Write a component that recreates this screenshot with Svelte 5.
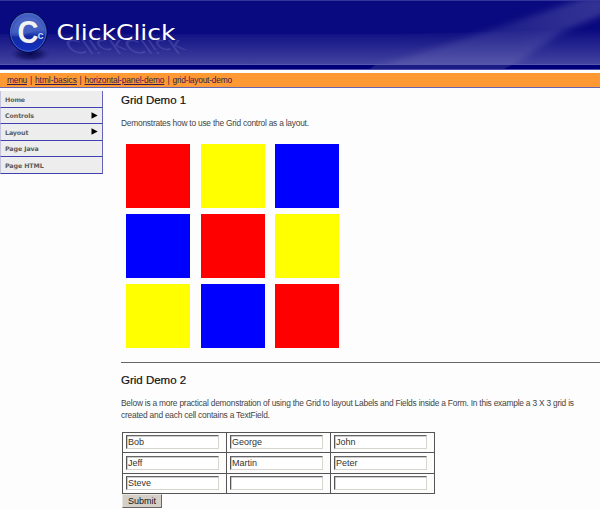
<script>
  const menu = [
    { label: 'Home', sub: false },
    { label: 'Controls', sub: true },
    { label: 'Layout', sub: true },
    { label: 'Page Java', sub: false },
    { label: 'Page HTML', sub: false }
  ];
  const colors = ['red', 'yellow', 'blue', 'blue', 'red', 'yellow', 'yellow', 'blue', 'red'];
  const rows = [
    ['Bob', 'George', 'John'],
    ['Jeff', 'Martin', 'Peter'],
    ['Steve', '', '']
  ];
</script>

<div class="page">
  <header>
    <svg width="600" height="70" viewBox="0 0 600 70">
      <defs>
        <linearGradient id="glow" x1="0" y1="0" x2="0" y2="1">
          <stop offset="0" stop-color="#0a0a80" />
          <stop offset="1" stop-color="#4242a0" />
        </linearGradient>
        <linearGradient id="beam" gradientUnits="userSpaceOnUse" x1="600" y1="0" x2="430" y2="65">
          <stop offset="0" stop-color="#fff" stop-opacity=".17" />
          <stop offset=".5" stop-color="#fff" stop-opacity=".1" />
          <stop offset="1" stop-color="#fff" stop-opacity=".1" />
        </linearGradient>
        <filter id="soft" x="-5%" y="-20%" width="110%" height="140%"><feGaussianBlur stdDeviation="3" /></filter>
        <linearGradient id="disc" x1="0" y1="0" x2="0" y2="1">
          <stop offset="0" stop-color="#4660c0" />
          <stop offset=".5" stop-color="#3450bc" />
          <stop offset=".6" stop-color="#1029a2" />
          <stop offset="1" stop-color="#1530c4" />
        </linearGradient>
        <radialGradient id="shade">
          <stop offset="0" stop-color="#080850" />
          <stop offset=".55" stop-color="#10105e" stop-opacity=".7" />
          <stop offset="1" stop-color="#202080" stop-opacity="0" />
        </radialGradient>
      </defs>
      <rect width="600" height="70" fill="#0a0a80" />
      <path d="M0 34H400L600 29V64H0Z" fill="url(#glow)" />
      <path d="M380 66L500 27L584 -2H606V13L562 32L535 50L504 74H360Z" fill="url(#beam)" filter="url(#soft)" />
      <rect y="65" width="600" height="4" fill="#000078" />
      <path d="M375 65H512L504 69H370Z" fill="#1b1b84" />
      <rect width="600" height="1" fill="#34349a" />
      <rect y="64" width="600" height="1" fill="#5656ac" />
      <rect y="69" width="600" height="1" fill="#5050ac" />
      <ellipse cx="30" cy="54" rx="20" ry="8" fill="url(#shade)" />
      <ellipse cx="28.3" cy="32.3" rx="18.8" ry="20" fill="url(#disc)" stroke="#05064a" stroke-width="1" />
      <ellipse cx="28.3" cy="32.3" rx="17.7" ry="18.9" fill="none" stroke="#4b70c8" stroke-width=".8" />
      <path d="M11.5 36A17 18.3 0 0 1 45 31Q36 30 29 33Q20 38 11.5 36Z" fill="#6e83d0" opacity=".25" />
      <text x="17.5" y="43" class="big-c" textLength="21" lengthAdjust="spacingAndGlyphs">C</text>
      <text x="37.5" y="38.5" class="small-c">c</text>
      <g transform="translate(62 40) skewX(35) scale(1 -.85)" opacity=".2">
        <text x="0" y="0" class="brand mirror" textLength="118" lengthAdjust="spacingAndGlyphs">ClickClick</text>
      </g>
      <text x="56.5" y="40" class="brand" textLength="119" lengthAdjust="spacingAndGlyphs">ClickClick</text>
    </svg>
  </header>

  <nav class="crumbs">
    <span class="link c1">menu</span><i>|</i><span class="link c2">html-basics</span><i>|</i><span
      class="link c3">horizontal-panel-demo</span><i>|</i><span class="c4">grid-layout-demo</span>
  </nav>

  <div class="body">
    <aside>
      {#each menu as item}
        <div class="item">
          <span>{item.label}</span>
          {#if item.sub}<svg width="7" height="7" viewBox="0 0 7 7"><path d="M.5 .3L6.7 3.5L.5 6.7Z" /></svg>{/if}
        </div>
      {/each}
    </aside>
    <main>
      <h2>Grid Demo 1</h2>
      <p class="p1">Demonstrates how to use the Grid control as a layout.</p>
      <div class="squares">
        {#each colors as c}<div class={c}></div>{/each}
      </div>
      <hr />
      <h2>Grid Demo 2</h2>
      <p class="p2">
        Below is a more practical demonstration of using the Grid to layout Labels and Fields inside a Form. In this example a 3 X 3 grid is<br />
        created and each cell contains a TextField.
      </p>
      <div class="table">
        {#each rows as row}
          {#each row as value}
            <div class="cell"><div class="field">{value}</div></div>
          {/each}
        {/each}
      </div>
      <button type="button">Submit</button>
    </main>
  </div>
</div>

<style>
  :global(body) { margin: 0; background: #fdfdfd; overflow: hidden; }
  .page { width: 600px; height: 509px; overflow: hidden; font-family: "Liberation Sans", Arial, sans-serif; background: #fdfdfd; }
  header { height: 70px; }
  header svg { display: block; }
  .brand { font: 21.5px "DejaVu Sans", sans-serif; fill: #fff; }
  .mirror { fill: #a0a0e0; }
  .big-c { font: bold 31px "Liberation Sans", sans-serif; fill: #f2f2f2; }
  .small-c { font: bold 11px "Liberation Sans", sans-serif; fill: #b9cff5; }
  .crumbs { display: flex; align-items: center; height: 14px; margin-top: 3px; padding-left: 7px; background: #ff9933; border-bottom: 1px solid #6464b0; font-size: 8.4px; color: #33214f; white-space: nowrap; line-height: 14px; }
  .crumbs i { width: 8px; text-align: center; font-style: normal; }
  .crumbs span { flex: none; }
  .link { text-decoration: underline; text-underline-offset: 1px; color: #3a1a50; }
  .c1 { width: 20px; letter-spacing: -.25px; }
  .c2 { width: 41.5px; letter-spacing: -.04px; }
  .c3 { width: 80px; letter-spacing: -.17px; }
  .c4 { letter-spacing: -.22px; }
  .body { display: flex; }
  aside { width: 102px; padding-top: 3px; flex: none; }
  .item { box-sizing: border-box; height: 16.5px; width: 102.5px; display: flex; align-items: center; justify-content: space-between; padding: 0 3.5px 0 4px; border-bottom: 1px solid #4040b0; border-right: 1px solid #6464bc; border-left: 1px solid #c5c5dd; background: #ededed; font: bold 6.3px "DejaVu Sans", sans-serif; letter-spacing: -.1px; color: #5c5c5c; }
  .item span { padding-top: 1px; }
  main { width: 479px; padding: 6px 0 0 19px; flex: none; }
  h2 { margin: 0; font-size: 11.5px; font-weight: 400; line-height: 13px; color: #111; -webkit-text-stroke: .2px #111; }
  p { margin: 0; font-size: 8.4px; line-height: 12px; color: #444; white-space: nowrap; }
  .p1 { margin-top: 10px; letter-spacing: -.225px; }
  .p2 { margin-top: 10.5px; height: 24px; letter-spacing: -.22px; }
  .squares { display: grid; grid-template-columns: repeat(3, 64px); grid-auto-rows: 64px; column-gap: 10.6px; row-gap: 6.4px; margin: 14.6px 0 0 5.1px; }
  .red { background: #f00; }
  .yellow { background: #ff0; }
  .blue { background: #00f; }
  hr { margin: 13.2px 0 11px; border: 0; height: 1px; background: #666; }
  .table { display: grid; grid-template-columns: 104px 104px 104px; grid-auto-rows: 20.5px; width: 312px; margin-top: 10.5px; margin-left: 1px; border-left: 1px solid #555; border-top: 1px solid #555; }
  .cell { box-sizing: border-box; padding: 2.5px 0 0 3px; border-right: 1px solid #555; border-bottom: 1px solid #555; }
  .field { box-sizing: border-box; width: 93px; height: 14px; border: 1px solid; border-color: #666 #d8d5cc #d8d5cc #555; box-shadow: inset .5px .5px #999; padding-left: 1px; font-size: 9px; line-height: 12.5px; color: #333; background: #fff; }
  button { display: block; box-sizing: border-box; width: 40px; height: 14px; margin-left: 1px; padding: 0; border: 1px solid; border-color: #e8e6df #666 #666 #e8e6df; background: #d4d0c8; font: 9px/12px "Liberation Sans", sans-serif; color: #111; }
</style>
